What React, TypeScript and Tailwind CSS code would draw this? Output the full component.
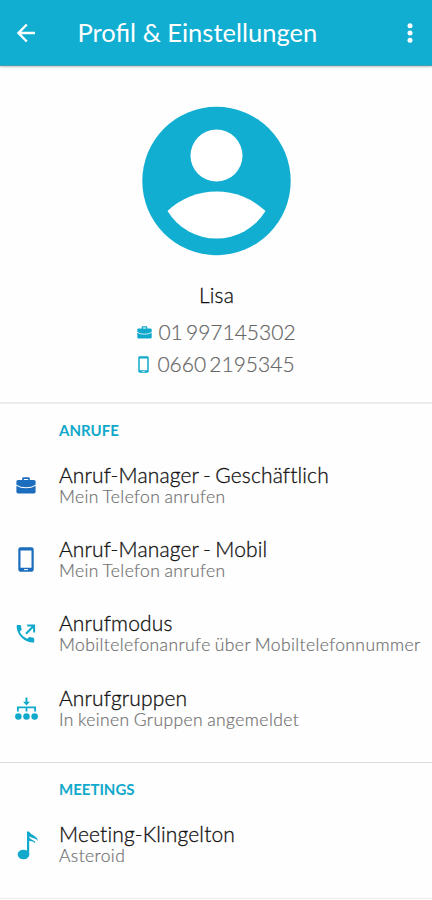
import React from 'react';

interface SettingRowProps {
  icon: React.ReactNode;
  title: string;
  subtitle: string;
}

function BriefcaseIcon({ className }: { className: string }) {
  return (
    <svg viewBox="0 0 20 17" className={className} fill="currentColor">
      <path fillRule="evenodd" d="M6.2 3V1.6Q6.2.3 7.5.3h5q1.3 0 1.3 1.3V3H18q1.6 0 1.6 1.6v3.2Q15.500 10.300 10 10.300T.4 7.800V4.600Q.4 3 2 3ZM7.900 3h4.200V1.900H7.900Z" />
      <path d="M.4 8.700q4 2.500 9.600 2.500t9.600-2.500V14.800q0 1.600-1.600 1.600H2Q.4 16.400.4 14.800Z" />
    </svg>
  );
}

function PhoneIcon({ className }: { className: string }) {
  return (
    <svg viewBox="0 0 16 25" className={className} fill="currentColor">
      <path fillRule="evenodd" d="M2.500.3h11Q15.700.3 15.700 2.500v20q0 2.200-2.200 2.200h-11Q.3 24.700.3 22.500v-20Q.3.300 2.500.300ZM2.500 3.500v17.300h11V3.500Z" />
      <path d="M6 22.100h4v1H6z" fill="#fff" />
    </svg>
  );
}

function CallOutIcon() {
  return (
    <svg width="20" height="20" viewBox="0 0 20 20" fill="none">
      <path d="M.6 1.700Q.6.900 1.500.9h2.600q.8 0 .9.800.1 1.700.7 3.200.2.600-.3 1.100L3.700 7.700q2.600 5 7.500 7.100l1.800-1.600q.5-.4 1.100-.2 1.500.5 3.300.7.800.1.800.9v3.100q0 .9-.9.900Q10.500 18.500 5.600 13.600T.6 1.700Z" fill="#11a9cb" />
      <path d="M10 9.700 17.600 2M11.200 1.500h6.900v7" stroke="#11a9cb" strokeWidth="2" />
    </svg>
  );
}

function GroupIcon() {
  return (
    <svg width="23" height="24" viewBox="0 0 24 25" fill="#11a9cb">
      <path d="M11 .500h2V5h2.600L12 8.800 8.400 5H11Z" />
      <path d="M3 15V10.800h18V15M12 10.800V15" fill="none" stroke="#11a9cb" strokeWidth="1.900" />
      <circle cx="3.500" cy="20.300" r="3.400" />
      <circle cx="12" cy="20.300" r="3.400" />
      <circle cx="20.500" cy="20.300" r="3.400" />
    </svg>
  );
}

function NoteIcon() {
  return (
    <svg width="22" height="29" viewBox="0 0 22 29" fill="#11a9cb" className="mt-[2px] ml-[4px]">
      <ellipse cx="6.500" cy="23.500" rx="5.800" ry="4.800" />
      <path d="M10 .500h2q1.200 2.200 4.800 4.100 3.500 1.900 4.200 5.300-1.300-1.400-3.600-2.300Q14.400 6.600 12.200 5.500V23.500H10Z" />
      <path d="M11.800 6q1.700 2.500 4.200 3.200 2.600 1 2.200 3-2-2.300-6.400-2.400Z" />
    </svg>
  );
}

function SettingRow({ icon, title, subtitle }: SettingRowProps) {
  return (
    <div className="flex h-[74.4px]">
      <div className="flex h-[73px] w-[52px] shrink-0 items-center justify-center">{icon}</div>
      <div className="pt-[12.5px] pl-[7px] whitespace-nowrap [font-variant-ligatures:none]">
        <div className="text-[21px] leading-[26px] font-light tracking-[0.15px] text-[#111] [-webkit-text-stroke:0.3px] [word-spacing:-1.5px]">{title}</div>
        <div className="text-[17.5px] leading-[17px] font-light tracking-[0.4px] text-[#707070] [-webkit-text-stroke:0.2px] [word-spacing:-1px]">{subtitle}</div>
      </div>
    </div>
  );
}

export default function App() {
  return (
    <div className="h-[900px] w-[432px] overflow-hidden bg-[#fefefe] font-['Lato',sans-serif]">
      <header className="flex h-[66px] items-center border-b border-[#3fa3b8] bg-[#11aed1] text-white shadow-[0_1px_2px_rgba(0,0,0,0.25)]">
        <svg width="18" height="20" viewBox="0 0 18 20" className="ml-[17px]" fill="none" stroke="currentColor" strokeWidth="2.400">
          <path d="M18 10H2M9.800 1.500 1.500 10l8.300 8.500" />
        </svg>
        <h1 className="mb-[2px] ml-[42.500px] text-[25.5px] leading-8 whitespace-nowrap">Profil &amp; Einstellungen</h1>
        <svg width="6" height="20" viewBox="0 0 6 20" className="mr-[19px] ml-auto" fill="currentColor">
          <circle cx="3" cy="2.800" r="2.500" />
          <circle cx="3" cy="10" r="2.500" />
          <circle cx="3" cy="17.200" r="2.500" />
        </svg>
      </header>

      <section className="flex h-[338px] flex-col items-center border-b-2 border-[#ececec] pt-[40px]">
        <svg width="150" height="150" viewBox="0 0 150 150" className="ml-px">
          <circle cx="74.500" cy="75" r="74.200" fill="#11aed1" />
          <circle cx="74.500" cy="49.600" r="26" fill="#fff" />
          <path d="M25.500 105A71.300 71.300 0 0 1 123.500 105A57.400 57.400 0 0 1 25.500 105Z" fill="#fff" />
        </svg>
        <div className="mt-[26px] ml-px text-[21px] leading-[26px] font-light tracking-[0.2px] text-[#111] [-webkit-text-stroke:0.3px]">Lisa</div>
        <div className="mt-[8px] ml-px flex h-8 items-center gap-[6px] text-[21px] font-light text-[#666] [-webkit-text-stroke:0.2px]">
          <BriefcaseIcon className="h-[13px] w-[15px] text-[#11a9cb]" />
          <span className="[word-spacing:-2.500px]">01 997145302</span>
        </div>
        <div className="ml-px flex h-8 items-center gap-[8px] text-[21px] font-light text-[#666] [-webkit-text-stroke:0.2px]">
          <PhoneIcon className="h-[17px] w-[11px] text-[#11a9cb]" />
          <span className="[word-spacing:-2.500px]">0660 2195345</span>
        </div>
      </section>

      <section className="h-[359px] border-b border-[#ddd] pt-[16px]">
        <h2 className="mb-[9px] ml-[59px] text-[15px] leading-5 font-bold text-[#11a9cb]">ANRUFE</h2>
        <SettingRow
          icon={<BriefcaseIcon className="h-[17px] w-[20px] text-[#1c6dbd]" />}
          title="Anruf-Manager - Geschäftlich"
          subtitle="Mein Telefon anrufen"
        />
        <SettingRow
          icon={<PhoneIcon className="h-[25px] w-[16px] text-[#1c6dbd]" />}
          title="Anruf-Manager - Mobil"
          subtitle="Mein Telefon anrufen"
        />
        <SettingRow
          icon={<CallOutIcon />}
          title="Anrufmodus"
          subtitle="Mobiltelefonanrufe über Mobiltelefonnummer"
        />
        <SettingRow
          icon={<GroupIcon />}
          title="Anrufgruppen"
          subtitle="In keinen Gruppen angemeldet"
        />
      </section>

      <section className="h-[136px] border-b border-[#eee] pt-[16px]">
        <h2 className="mb-[9px] ml-[59px] text-[15px] leading-5 font-bold text-[#11a9cb]">MEETINGS</h2>
        <SettingRow icon={<NoteIcon />} title="Meeting-Klingelton" subtitle="Asteroid" />
      </section>
    </div>
  );
}
